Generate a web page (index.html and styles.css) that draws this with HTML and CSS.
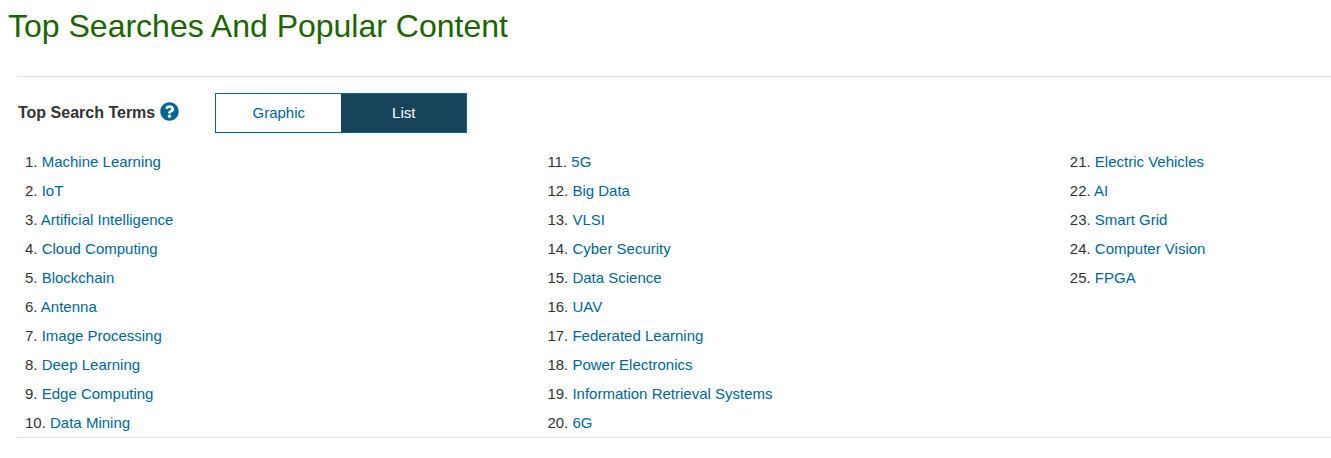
FILE: index.html
```html
<!DOCTYPE html>
<html lang="en">
<head>
<meta charset="utf-8">
<title>Top Searches And Popular Content</title>
<link rel="stylesheet" href="styles.css">
</head>
<body>
<main class="page">
  <h1 class="page-title">Top Searches And Popular Content</h1>
  <section class="searches">
    <div class="toolbar">
      <div class="heading">
        <h2 class="heading-text">Top Search Terms</h2>
        <button class="help" type="button" aria-label="About top search terms">
          <svg class="help-icon" viewBox="0 0 512 512" aria-hidden="true"><path fill="currentColor" d="M504 256c0 136.997-111.043 248-248 248S8 392.997 8 256C8 119.083 119.043 8 256 8s248 111.083 248 248zM262.655 90c-54.497 0-89.255 22.957-116.549 63.758-3.536 5.286-2.353 12.415 2.715 16.258l34.699 26.31c5.205 3.947 12.621 3.008 16.665-2.122 17.864-22.658 30.113-35.797 57.303-35.797 20.429 0 45.698 13.148 45.698 32.958 0 14.976-12.363 22.667-32.534 33.976C247.128 238.528 216 254.941 216 296v4c0 6.627 5.373 12 12 12h56c6.627 0 12-5.373 12-12v-1.333c0-28.462 83.186-29.647 83.186-106.667 0-58.002-60.165-102-116.531-102zM256 338c-25.365 0-46 20.635-46 46 0 25.364 20.635 46 46 46s46-20.636 46-46c0-25.365-20.635-46-46-46z"/></svg>
        </button>
      </div>
      <div class="toggle">
        <button class="toggle-option" type="button" aria-pressed="false">Graphic</button>
        <button class="toggle-option is-active" type="button" aria-pressed="true">List</button>
      </div>
    </div>
    <ol class="terms">
      <li>1. <a href="#">Machine Learning</a></li>
      <li>2. <a href="#">IoT</a></li>
      <li>3. <a href="#">Artificial Intelligence</a></li>
      <li>4. <a href="#">Cloud Computing</a></li>
      <li>5. <a href="#">Blockchain</a></li>
      <li>6. <a href="#">Antenna</a></li>
      <li>7. <a href="#">Image Processing</a></li>
      <li>8. <a href="#">Deep Learning</a></li>
      <li>9. <a href="#">Edge Computing</a></li>
      <li>10. <a href="#">Data Mining</a></li>
      <li>11. <a href="#">5G</a></li>
      <li>12. <a href="#">Big Data</a></li>
      <li>13. <a href="#">VLSI</a></li>
      <li>14. <a href="#">Cyber Security</a></li>
      <li>15. <a href="#">Data Science</a></li>
      <li>16. <a href="#">UAV</a></li>
      <li>17. <a href="#">Federated Learning</a></li>
      <li>18. <a href="#">Power Electronics</a></li>
      <li>19. <a href="#">Information Retrieval Systems</a></li>
      <li>20. <a href="#">6G</a></li>
      <li>21. <a href="#">Electric Vehicles</a></li>
      <li>22. <a href="#">AI</a></li>
      <li>23. <a href="#">Smart Grid</a></li>
      <li>24. <a href="#">Computer Vision</a></li>
      <li>25. <a href="#">FPGA</a></li>
    </ol>
  </section>
</main>
</body>
</html>
```

FILE: styles.css
```css
* {
  box-sizing: border-box;
}

body {
  margin: 0;
  background: #fff;
  color: #333;
  font: 15px/20px "Liberation Sans", Arial, sans-serif;
}

.page-title {
  margin: 0;
  padding: 6px 8px 30px;
  color: #1c6400;
  font-size: 32px;
  font-weight: 400;
  line-height: 40px;
}

.searches {
  margin-left: 17px;
  border-top: 1px solid #ddd;
  border-bottom: 1px solid #ddd;
}

.toolbar {
  display: flex;
  align-items: center;
  gap: 36px;
  padding-top: 16px;
}

.heading {
  display: flex;
  align-items: center;
  gap: 5px;
  padding-left: 1px;
}

.heading-text {
  margin: 0;
  font-size: 16px;
  line-height: 20px;
}

.help {
  display: flex;
  padding: 0 0 3px;
  border: 0;
  background: none;
  color: #069;
}

.help-icon {
  width: 19px;
  height: 19px;
}

.toggle {
  display: flex;
  border: 1px solid #069;
}

.toggle-option {
  width: 125px;
  height: 38px;
  padding: 0;
  border: 0;
  background: #fff;
  color: #069;
  font: inherit;
}

.toggle-option.is-active {
  background: #17445a;
  color: #fff;
}

.terms {
  display: grid;
  grid-template-rows: repeat(10, 29px);
  grid-template-columns: 2fr 2fr 1fr;
  grid-auto-flow: column;
  margin: 0;
  padding: 14px 0 0 8px;
  line-height: 29px;
  list-style: none;
}

.terms a {
  color: #069;
  text-decoration: none;
}
```
